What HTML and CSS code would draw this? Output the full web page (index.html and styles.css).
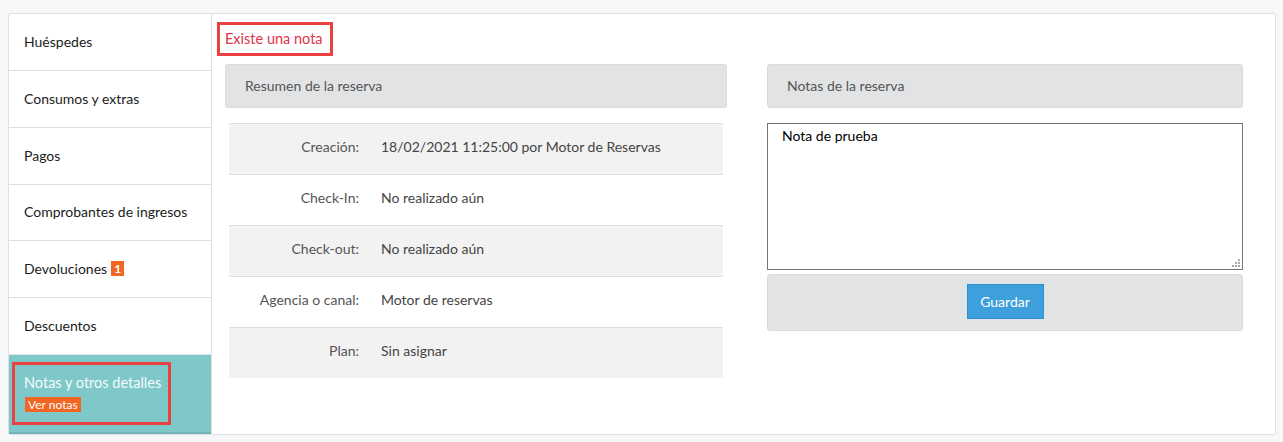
FILE: index.html
```html
<!DOCTYPE html>
<html lang="es">
<head>
<meta charset="utf-8">
<title>Reserva</title>
<link rel="stylesheet" href="styles.css">
</head>
<body>
<div class="frame">
  <nav class="sidebar">
    <div class="nav-item">Huéspedes</div>
    <div class="nav-item">Consumos y extras</div>
    <div class="nav-item">Pagos</div>
    <div class="nav-item short">Comprobantes de ingresos</div>
    <div class="nav-item">Devoluciones <span class="count">1</span></div>
    <div class="nav-item">Descuentos</div>
    <div class="nav-item active">
      <div class="mark-box">
        <div class="active-title">Notas y otros detalles</div>
        <span class="tag">Ver notas</span>
      </div>
    </div>
  </nav>
  <main class="content">
    <div class="flash-row"><span class="flash">Existe una nota</span></div>
    <div class="cols">
      <section class="col">
        <div class="panel-head">Resumen de la reserva</div>
        <div class="summary">
          <div class="row shade"><div class="lbl">Creación:</div><div class="val">18/02/2021 11:25:00 por Motor de Reservas</div></div>
          <div class="row"><div class="lbl">Check-In:</div><div class="val">No realizado aún</div></div>
          <div class="row shade"><div class="lbl">Check-out:</div><div class="val">No realizado aún</div></div>
          <div class="row"><div class="lbl">Agencia o canal:</div><div class="val">Motor de reservas</div></div>
          <div class="row shade"><div class="lbl">Plan:</div><div class="val">Sin asignar</div></div>
        </div>
      </section>
      <section class="col">
        <div class="panel-head">Notas de la reserva</div>
        <div class="note-wrap">
          <textarea class="note">Nota de prueba</textarea>
          <span class="grip"></span>
        </div>
        <div class="panel-foot"><button class="save">Guardar</button></div>
      </section>
    </div>
  </main>
</div>
</body>
</html>
```

FILE: styles.css
```css
* { box-sizing: border-box; }
html, body { margin: 0; padding: 0; }
body {
  background: #f6f7f9;
  font-family: Lato, "Open Sans", sans-serif;
  font-size: 14px;
  color: #222;
}
.frame {
  margin: 13px 0 0 8px;
  width: 1268px;
  height: 422px;
  background: #fff;
  border: 1px solid #dfe0e2;
  border-radius: 3px;
  display: flex;
}
.sidebar {
  width: 203px;
  border-right: 1px solid #dfe0e2;
  display: flex;
  flex-direction: column;
}
.nav-item {
  height: 57px;
  border-bottom: 1px solid #dfe0e2;
  padding: 0 15px 2px;
  display: flex;
  align-items: center;
  color: #1b1b1b;
  flex: none;
}
.nav-item.short { height: 56px; }
.count {
  display: inline-block;
  background: #f26522;
  color: #fff;
  font-weight: bold;
  font-size: 12px;
  line-height: 15px;
  padding: 0 3px;
  margin-left: 4px;
}
.nav-item.active {
  flex: 1;
  background: #7fc8c9;
  border-bottom: 2px solid #73b5b6;
  padding: 7px 40px 7px 3px;
  align-items: stretch;
}
.mark-box {
  flex: 1;
  border: 3px solid #ea4141;
  padding: 9px 0 0 9px;
  white-space: nowrap;
}
.active-title {
  color: #f4fbfb;
  font-size: 14.5px;
  line-height: 18px;
}
.tag {
  display: inline-block;
  margin: 5px 0 0 1px;
  background: #f26522;
  color: #fff;
  font-size: 12px;
  line-height: 15px;
  padding: 0 3px;
}
.content {
  flex: 1;
  padding: 8px 0 0 13px;
}
.flash-row { height: 42px; }
.flash {
  display: inline-block;
  margin-left: -8px;
  border: 3px solid #ea4141;
  padding: 0 7px 0 5px;
  height: 34px;
  line-height: 28px;
  color: #e3334a;
  font-size: 14.5px;
}
.cols {
  display: grid;
  grid-template-columns: 502px 476px;
  column-gap: 40px;
}
.panel-head {
  height: 44px;
  background: #e2e3e5;
  border: 1px solid #dadbdd;
  border-radius: 3px;
  padding: 0 19px 1px;
  display: flex;
  align-items: center;
  color: #555;
}
.summary {
  margin: 15px 4px 0 4px;
}
.row {
  height: 51px;
  border-top: 1px solid #dedede;
  display: flex;
  align-items: center;
  padding-bottom: 6px;
}
.row.shade { background: #f2f2f2; }
.lbl {
  width: 130px;
  text-align: right;
  color: #555;
}
.val {
  margin-left: 22px;
  color: #444;
}
.note-wrap {
  position: relative;
  margin-top: 15px;
}
.note {
  display: block;
  width: 476px;
  height: 147px;
  border: 1px solid #767676;
  padding: 3px 14px;
  font-family: Lato, "Open Sans", sans-serif;
  font-size: 14px;
  color: #000;
  resize: none;
  outline: none;
}
.grip {
  position: absolute;
  right: 3px;
  bottom: 3px;
  width: 8px;
  height: 8px;
  background:
    linear-gradient(#aaa, #aaa) 6px 0 / 2px 2px no-repeat,
    linear-gradient(#aaa, #aaa) 3px 3px / 2px 2px no-repeat,
    linear-gradient(#aaa, #aaa) 6px 3px / 2px 2px no-repeat,
    linear-gradient(#aaa, #aaa) 0 6px / 2px 2px no-repeat,
    linear-gradient(#aaa, #aaa) 3px 6px / 2px 2px no-repeat,
    linear-gradient(#aaa, #aaa) 6px 6px / 2px 2px no-repeat;
}
.panel-foot {
  margin-top: 4px;
  height: 57px;
  background: #e2e3e5;
  border: 1px solid #dadbdd;
  border-radius: 3px;
  display: flex;
  justify-content: center;
  align-items: center;
}
.save {
  width: 77px;
  height: 35px;
  background: #3d9fdb;
  border: 1px solid #2d90d2;
  color: #fff;
  font-family: Lato, "Open Sans", sans-serif;
  font-size: 14px;
  padding: 0;
  margin-top: -2px;
}
```
